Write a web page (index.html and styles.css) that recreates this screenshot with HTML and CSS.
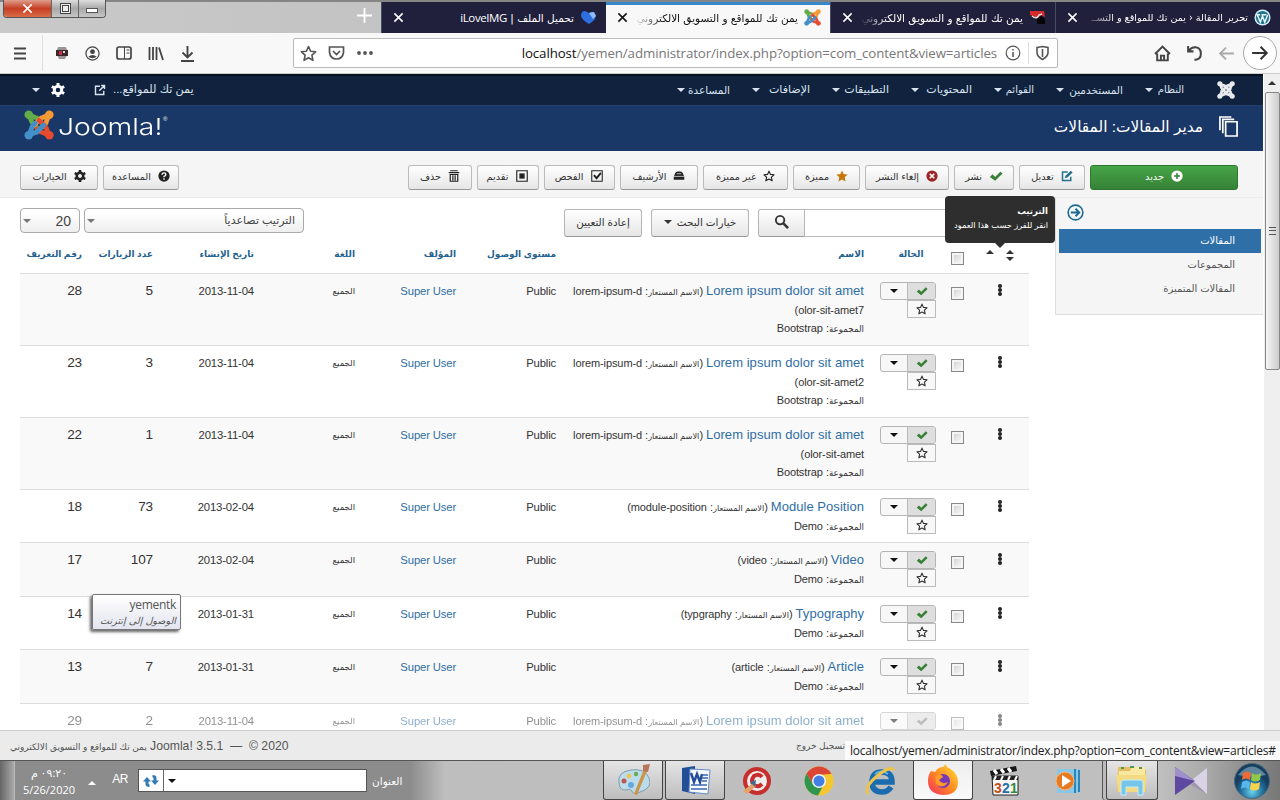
FILE: index.html
```html
<!DOCTYPE html>
<html lang="ar" dir="rtl">
<head>
<meta charset="utf-8">
<title>مدير المقالات</title>
<link rel="stylesheet" href="styles.css">
</head>
<body>
<svg class="sprite" aria-hidden="true">
  <symbol id="joomla" viewBox="0 0 32 32">
    <g fill="none" stroke-width="5" stroke-linecap="round" stroke-linejoin="round">
      <path class="jg" d="M5 5l3 7q0 1 2 3l6 6M5 5l7 3q2 0 4 2l2 2"/>
      <path class="jo" d="M27 5l-7 3q-2 0-3 2l-6 6M27 5l-3 7q0 2-2 4l-2 2"/>
      <path class="jr" d="M27 27l-3-7q0-1-2-3l-6-6M27 27l-7-3q-2 0-4-2l-2-2"/>
      <path class="jb" d="M5 27l7-3q2 0 3-2l6-6M5 27l3-7q0-2 2-4l2-2"/>
      <path class="jg" d="M5 5h.1" stroke-width="9"/><path class="jo" d="M27 5h.1" stroke-width="9"/><path class="jr" d="M27 27h.1" stroke-width="9"/><path class="jb" d="M5 27h.1" stroke-width="9"/>
    </g>
  </symbol>
  <symbol id="star" viewBox="0 0 16 16"><path d="M8 1.5l2 4.400 4.700.5-3.500 3.200 1 4.800L8 12l-4.200 2.400 1-4.800L1.300 6.400l4.700-.5z" fill="none" stroke="currentColor" stroke-width="1.500" stroke-linejoin="round"/></symbol>
  <symbol id="starfull" viewBox="0 0 16 16"><path d="M8 .5l2.300 5 5.200.6-3.900 3.700 1.100 5.400L8 12.500l-4.700 2.700 1.100-5.400L.5 6.100l5.200-.6z" fill="currentColor"/></symbol>
  <symbol id="check" viewBox="0 0 16 16"><path d="M1 9l3-3 3 3 6-6 2.500 2.200L7 13.500z" fill="currentColor"/></symbol>
  <symbol id="gear" viewBox="0 0 16 16"><circle cx="8" cy="8" r="4.300" fill="none" stroke="currentColor" stroke-width="3.400"/><path d="M8 0v3M8 13v3M1 4l2.600 1.500M12.400 10.500L15 12M1 12l2.600-1.500M12.400 5.500L15 4" stroke="currentColor" stroke-width="3.400"/></symbol>
  <symbol id="trash" viewBox="0 0 16 16"><path d="M1 3.500h14M3 1h10M3 6h10v9H3zM6.500 7v7M9.500 7v7" fill="none" stroke="currentColor" stroke-width="1.600"/></symbol>
  <symbol id="square" viewBox="0 0 16 16"><path d="M2 2h12v12H2z" fill="none" stroke="currentColor" stroke-width="1.300"/><path d="M5 5h6v6H5z" fill="currentColor"/></symbol>
  <symbol id="checkbox" viewBox="0 0 16 16"><path d="M2 2h12v12H2z" fill="none" stroke="currentColor" stroke-width="1.200"/><path d="M4.500 7l3 3.500 5-6" fill="none" stroke="currentColor" stroke-width="2.200"/></symbol>
  <symbol id="drawer" viewBox="0 0 16 16"><path d="M1 9l2-5q1-2 3-2h4q2 0 3 2l2 5v4H1z" fill="currentColor"/><path d="M1 8.500h14M5 5h6" fill="none" stroke="#eee"/></symbol>
  <symbol id="cancel" viewBox="0 0 16 16"><circle cx="8" cy="8" r="7.500" fill="currentColor"/><path d="M5 5l6 6M11 5l-6 6" stroke="#fff" stroke-width="2.200"/></symbol>
  <symbol id="edit" viewBox="0 0 16 16"><path d="M9 2.500H2v11.500h11V9" fill="none" stroke="currentColor" stroke-width="2"/><path d="M5 11l1-3.500L13 1l2.500 2.200L8.500 10z" fill="currentColor"/></symbol>
  <symbol id="plus" viewBox="0 0 16 16"><circle cx="8" cy="8" r="7.500" fill="#fff"/><path d="M8 4v8M4 8h8" stroke="#378137" stroke-width="2"/></symbol>
  <symbol id="help" viewBox="0 0 16 16"><circle cx="8" cy="8" r="7.500" fill="currentColor"/><path d="M5.500 6.200q0-2.400 2.500-2.400t2.500 2.100q0 1.600-2.500 2.600v1M8 11v2" fill="none" stroke="#fff" stroke-width="1.800"/></symbol>
  <symbol id="search" viewBox="0 0 16 16"><circle cx="6.500" cy="6.500" r="4.500" fill="none" stroke="currentColor" stroke-width="2"/><path d="M10 10l5 5" stroke="currentColor" stroke-width="2.800"/></symbol>
  <symbol id="external" viewBox="0 0 16 16"><path d="M8 3H2v11h11V9M7 9l6.500-6.500M9.500 2H14v4.500" fill="none" stroke="currentColor" stroke-width="1.900"/></symbol>
  <symbol id="copies" viewBox="0 0 20 22"><path d="M7 6h12v15H7zM4 18V3.500h12M1 15V1h12" fill="none" stroke="currentColor" stroke-width="1.800"/></symbol>
  <symbol id="arrow" viewBox="0 0 16 16"><path d="M1 8h13M8.500 2.500L14 8l-5.500 5.500" fill="none" stroke="currentColor" stroke-width="1.800"/></symbol>
  <symbol id="close" viewBox="0 0 12 12"><path d="M1.500 1.500l9 9M10.500 1.500l-9 9" stroke="currentColor" stroke-width="1.700"/></symbol>
</svg>

<header class="tabs">
  <div class="tab"><svg width="17" height="17" viewBox="0 0 18 18"><circle cx="9" cy="9" r="8.500" fill="#d5f1fa"/><circle cx="9" cy="9" r="7" fill="#25738f"/><path d="M3.500 6l3.200 8L9 7.500l2.400 6.500L14.500 6M2.500 6h4M8 6h5" fill="none" stroke="#e8fbff" stroke-width="1.500"/></svg><span class="title fading first">تحرير المقالة ‹ يمن تك للمواقع و التســ</span><svg class="x"><use href="#close"/></svg></div>
  <div class="tab"><svg width="17" height="15" viewBox="0 0 17 15"><path d="M1 1h14l1 6-4-2-3 3L1 5z" fill="#d62b2b"/><path d="M8 8l4-2 4 3v5H8z" fill="#050505"/><path d="M3 6q5 4 7-1l3-1" fill="none" stroke="#ddd" stroke-width="1.500"/></svg><span class="title fading">يمن تك للمواقع و التسويق الالكتروني</span><svg class="x"><use href="#close"/></svg></div>
  <div class="tab active"><svg class="jcolor" width="17" height="17"><use href="#joomla"/></svg><span class="title fading">يمن تك للمواقع و التسويق الالكتروني</span><svg class="x"><use href="#close"/></svg></div>
  <div class="tab"><svg width="17" height="15" viewBox="0 0 17 15"><path d="M1 6q0-5 4-5l4 2q4-3 6 1 3 4-6 10Q2 10 1 6z" fill="#2e6fe0"/><path d="M9 3l5-1 2 4-3 3z" fill="#8fbbf8"/></svg><span class="title">تحميل الملف | <bdi>iLoveIMG</bdi></span><svg class="x"><use href="#close"/></svg></div>
  <div class="newtab"><svg width="17" height="17" viewBox="0 0 17 17"><path d="M8.500 1v15M1 8.500h15" stroke="#fff" stroke-width="1.800"/></svg></div>
  <div class="wincontrols"><span class="min"><i></i></span><span class="max"><i></i></span><span class="exit"><svg width="11" height="11"><use href="#close"/></svg></span></div>
</header>

<nav class="browser">
  <span class="forward"><svg width="18" height="18"><use href="#arrow"/></svg></span>
  <svg class="back" width="17" height="17"><use href="#arrow"/></svg>
  <svg class="reload" width="17" height="17" viewBox="0 0 16 16"><path d="M2 1v5h5M2.500 5.500Q5 2 9 2.200q5 .5 5 6t-6 5.800" fill="none" stroke="currentColor" stroke-width="1.900"/></svg>
  <svg class="home" width="17" height="17" viewBox="0 0 16 16"><path d="M1 8.500L8 1.500l7 7M3 8v6.500h10V8M6.500 14v-4h3v4" fill="none" stroke="currentColor" stroke-width="1.800"/></svg>
  <div class="urlbar">
    <svg width="15" height="16" viewBox="0 0 15 16"><path d="M2 2.500l5.500-1 5.500 1v5q0 4-5.500 7Q2 11.500 2 7.500zM7.500 4v8" fill="none" stroke="currentColor" stroke-width="1.600"/></svg>
    <i class="rule"></i>
    <svg width="16" height="16" viewBox="0 0 16 16"><circle cx="8" cy="8" r="6.800" fill="none" stroke="currentColor" stroke-width="1.200"/><path d="M8 7v5M8 4v1.600" stroke="currentColor" stroke-width="1.500"/></svg>
    <span class="url" dir="ltr"><b>localhost</b>/yemen/administrator/index.php?option=com_content&amp;view=articles</span>
    <svg width="18" height="6" viewBox="0 0 18 6"><g fill="currentColor"><circle cx="3" cy="3" r="1.900"/><circle cx="9" cy="3" r="1.900"/><circle cx="15" cy="3" r="1.900"/></g></svg>
    <svg width="17" height="16" viewBox="0 0 17 16"><path d="M1.500 2h14v5.500q-1 6.500-7 6.500t-7-6.500zM5 6l3.500 3.500L12 6" fill="none" stroke="currentColor" stroke-width="1.700"/></svg>
    <svg width="17" height="17"><use href="#star"/></svg>
  </div>
  <div class="tools">
    <svg width="15" height="17" viewBox="0 0 15 17"><path d="M7.500 1v11M2.500 7.500l5 5 5-5M1 16h13" fill="none" stroke="currentColor" stroke-width="1.900"/></svg>
    <svg width="16" height="15" viewBox="0 0 16 15"><path d="M1.500 1v13M5 1v13M8.500 1v13M11 1.500L15 14" stroke="currentColor" stroke-width="1.800"/></svg>
    <svg width="16" height="14" viewBox="0 0 16 14"><rect x="1" y="1" width="14" height="12" rx="2" fill="none" stroke="currentColor" stroke-width="1.700"/><path d="M8.500 1v12M10.500 4h3M10.500 7h3" stroke="currentColor"/></svg>
    <svg width="15" height="15" viewBox="0 0 16 16"><circle cx="8" cy="8" r="7" fill="none" stroke="currentColor" stroke-width="1.300"/><circle cx="8" cy="6" r="2.600" fill="currentColor"/><path d="M3.500 11.500q4.500-4 9 0-4.500 3-9 0z" fill="currentColor"/></svg>
    <svg width="14" height="14" viewBox="0 0 14 14"><path d="M3 1h8l2 6-3 6H4L1 7z" fill="#9b9694"/><path d="M1 4h12v6H1z" fill="#39272b"/><path d="M4 5h3v4H4z" fill="#bd344b"/><path d="M8 5h2v2H8z" fill="#e6d5d2"/></svg>
    <i class="rule"></i>
    <svg width="14" height="13" viewBox="0 0 14 13"><path d="M1 1.500h12M1 6.500h12M1 11.500h12" stroke="currentColor" stroke-width="1.900"/></svg>
  </div>
</nav>

<div class="viewport">
  <div class="scroll"><i class="up"></i><div class="thumb"><i></i></div></div>
  <main class="page">
    <nav class="menu">
      <svg class="mono" width="18" height="18"><use href="#joomla"/></svg>
      <a class="m1">النظام</a><a class="m2">المستخدمين</a><a class="m3">القوائم</a><a class="m4">المحتويات</a><a class="m5">التطبيقات</a><a class="m6">الإضافات</a><a class="m7">المساعدة</a>
      <span class="site">يمن تك للمواقع...</span>
      <svg class="ext" width="12" height="12"><use href="#external"/></svg>
      <svg class="cog" width="14" height="14"><use href="#gear"/></svg>
      <i class="caret"></i>
    </nav>
    <div class="header">
      <svg width="19" height="21"><use href="#copies"/></svg>
      <h1>مدير المقالات: المقالات</h1>
      <div class="brand" dir="ltr"><svg class="jcolor" width="30" height="30"><use href="#joomla"/></svg><span>Joomla!</span><sup>®</sup></div>
    </div>
    <div class="actions">
      <button class="btn new"><svg><use href="#plus"/></svg>جديد</button>
      <button class="btn b-edit"><svg class="teal"><use href="#edit"/></svg>تعديل</button>
      <button class="btn b-pub"><svg class="green wide"><use href="#check"/></svg>نشر</button>
      <button class="btn b-unpub"><svg class="red"><use href="#cancel"/></svg>إلغاء النشر</button>
      <button class="btn b-feat"><svg class="orange"><use href="#starfull"/></svg>مميزة</button>
      <button class="btn b-unfeat"><svg><use href="#star"/></svg>غير مميزة</button>
      <button class="btn b-arch"><svg><use href="#drawer"/></svg>الأرشيف</button>
      <button class="btn b-chk"><svg class="wide"><use href="#checkbox"/></svg>الفحص</button>
      <button class="btn b-front"><svg class="wide"><use href="#square"/></svg>تقديم</button>
      <button class="btn b-del"><svg><use href="#trash"/></svg>حذف</button>
      <span class="grow"></span>
      <button class="btn b-help"><svg><use href="#help"/></svg>المساعدة</button>
      <button class="btn b-opt"><svg><use href="#gear"/></svg>الخيارات</button>
    </div>
    <div class="body">
      <aside class="sidebar">
        <svg width="17" height="17" viewBox="0 0 18 18"><circle cx="9" cy="9" r="7.800" fill="none" stroke="currentColor" stroke-width="1.700"/><path d="M4 9h9M9 5l4 4-4 4" fill="none" stroke="currentColor" stroke-width="2"/></svg>
        <a class="on">المقالات</a><a>المجموعات</a><a>المقالات المتميزة</a>
      </aside>
      <section class="content">
        <div class="filters">
          <div class="searchbox"><span class="input"></span><button class="fbtn"><svg width="15" height="15"><use href="#search"/></svg></button></div>
          <button class="fbtn f-opt">خيارات البحث <i class="caret"></i></button>
          <button class="fbtn f-reset">إعادة التعيين</button>
          <span class="grow"></span>
          <div class="select s-order"><span>الترتيب تصاعدياً</span><i class="caret"></i></div>
          <div class="select s-count"><span>20</span><i class="caret"></i></div>
        </div>
        <div class="row head">
          <div class="sort"><i class="both"></i><i class="up"></i></div>
          <div class="c-check"><i class="box"></i></div>
          <div class="c-state">الحالة</div><div>الاسم</div><div>مستوى الوصول</div><div>المؤلف</div><div>اللغة</div><div>تاريخ الإنشاء</div><div>عدد الزيارات</div><div>رقم التعريف</div>
        </div>
        <div id="rows"></div>
      </section>
    </div>
    <div class="tip"><b>الترتيب</b><span>انقر للفرز حسب هذا العمود</span></div>
    <div class="nettip"><span>yementk</span><em>الوصول إلى إنترنت</em></div>
  </main>
</div>

<footer class="status">
  <span class="logout">تسجيل خروج</span>
  <span class="copy" dir="ltr"><bdi class="sitename">يمن تك للمواقع و التسويق الالكتروني</bdi> Joomla! 3.5.1 &nbsp;—&nbsp; © 2020</span>
  <span class="link" dir="ltr">localhost/yemen/administrator/index.php?option=com_content&amp;view=articles#</span>
</footer>

<div class="taskbar">
  <span class="app start"><svg width="38" height="38" viewBox="0 0 38 38"><defs><radialGradient id="orb" cy=".8"><stop offset="0" stop-color="#6bd3ed"/><stop offset=".6" stop-color="#23719f"/><stop offset="1" stop-color="#153e60"/></radialGradient></defs><circle cx="19" cy="19" r="17.500" fill="url(#orb)" stroke="#48677c"/><path d="M5 13q14-17 28 0-14 3-28 0z" fill="#b8dce9" opacity=".45"/><path d="M10 11q4-3 8 0l-1 7q-4-3-8 0z" fill="#ef6a35"/><path d="M19 11q4 3 9 0l-1 7q-5 3-9 0z" fill="#91c84b"/><path d="M9 20q4-3 8 0l-1 7q-4-3-8 0z" fill="#59b5ed"/><path d="M18 20q4 3 9 0l-1 7q-5 3-9 0z" fill="#fad34b"/></svg></span>
  <span class="app kmp"><svg width="34" height="30" viewBox="0 0 34 30"><path d="M1 1l20 14L1 29z" fill="#5f489f"/><path d="M1 1l20 14-20-5z" fill="#9f8fca"/><path d="M33 2L19 13l2 2-3 3 15 10z" fill="#d9d4e5"/><path d="M33 28L20 16l-3 3z" fill="#9d97ac"/></svg></span>
  <span class="app open folder"><svg width="34" height="32" viewBox="0 0 34 32"><path d="M3 3h12l2 3h14v22H2z" fill="#e3bf62"/><path d="M4 7h11l2-4h13v18H3z" fill="#fae8a0"/><path d="M6 4h3M15 3h4M24 4h3" stroke="#52965a" stroke-width="2"/><path d="M1 11h31l-2 17H3z" fill="#f4da83"/><path d="M6 31V19q0-3 3-3h16q3 0 3 3v12h-5v-8H11v8z" fill="#75c6e8" stroke="#c7edf9"/></svg></span>
  <span class="app wmp"><svg width="30" height="30" viewBox="0 0 30 30"><path d="M4 3h22v24H4z" fill="#89c7e8"/><path d="M21 3h2v24h-2M25 4h2v22h-2" fill="#2a85bd"/><circle cx="12" cy="15" r="9" fill="#e77b24" stroke="#f7ba7d"/><path d="M9 9l9 6-9 6z" fill="#fff"/></svg></span>
  <span class="app mpc"><svg width="32" height="32" viewBox="0 0 32 32"><path d="M3 11h26v19H4z" fill="#f7f7f7" stroke="#222"/><path d="M1 6l26-5 1 5L2 11z" fill="#151515"/><path d="M5 5l3 4M12 4l3 4M19 3l3 4" stroke="#fff" stroke-width="3"/><path d="M3 11h26v4H3z" fill="#222"/><path d="M7 11l-2 4M14 11l-2 4M21 11l-2 4M28 11l-2 4" stroke="#fff" stroke-width="2"/><g font-family="Liberation Sans" font-weight="700" font-size="14" direction="ltr"><text x="5" y="28" fill="#c24d16">3</text><text x="13" y="28" fill="#246faa">2</text><text x="21" y="28" fill="#35893b">1</text></g></svg></span>
  <span class="app open ff"><svg width="32" height="32" viewBox="0 0 32 32"><defs><linearGradient id="fx" x1="1" x2="0" y2="1"><stop offset="0" stop-color="#ffe53d"/><stop offset=".5" stop-color="#ff8b22"/><stop offset="1" stop-color="#f42b61"/></linearGradient></defs><path d="M4 7l4 1q3-5 8-5l3-3q0 3 3 4 9 5 9 14 0 13-15 13Q1 30 1 17q0-6 3-10z" fill="url(#fx)"/><circle cx="16" cy="17" r="7" fill="#7638b8"/><path d="M8 12q6-4 8 1l-4 3q3 5 9 2-5 8-12 2z" fill="#ff9a24"/></svg></span>
  <span class="app ie"><svg width="32" height="32" viewBox="0 0 32 32"><path d="M26 22Q23 27 17 27 7 27 7 17T17 7q10 0 10 10H9" fill="none" stroke="#1a6cae" stroke-width="5.500"/><path d="M10 9q6-5 13 0" fill="none" stroke="#5fb5e6" stroke-width="2"/><path d="M3 29Q-1 22 12 11 26 0 29 5" fill="none" stroke="#eec34b" stroke-width="3"/></svg></span>
  <span class="app chrome"><svg width="30" height="30" viewBox="0 0 30 30"><circle cx="15" cy="15" r="14.500" fill="#f6c62f"/><path d="M2.500 7.700A14.500 14.500 0 0 1 27.500 7.700L15 9l-6 9z" fill="#da4535"/><path d="M2.500 7.700A14.500 14.500 0 0 0 14 29.500L20 18l-11 0z" fill="#30954f"/><circle cx="15" cy="15" r="7" fill="#f4f4f4"/><circle cx="15" cy="15" r="5.500" fill="#447fe6"/></svg></span>
  <span class="app cc"><svg width="30" height="30" viewBox="0 0 30 30"><circle cx="15" cy="15" r="14" fill="#c72f2d"/><circle cx="15" cy="15" r="10" fill="#eee"/><path d="M20 11q-3-4-8-1-4 5 0 9 4 3 8-1" fill="none" stroke="#cb2d2c" stroke-width="4"/><path d="M1 25l10-8 3 3L5 28z" fill="#e1a26b"/><path d="M8 16l5 5 1-7z" fill="#3e6d93"/></svg></span>
  <span class="app open word"><svg width="31" height="31" viewBox="0 0 31 31"><path d="M2 3l13-2v28L2 26z" fill="#234d94"/><path d="M10 4l20 1-2 24-19-2z" fill="#f6faff" stroke="#668cc8"/><path d="M11 8l3 9 3-8 3 8 2-8" fill="none" stroke="#244e99" stroke-width="2.500"/><path d="M22 10h6M22 13h6M22 16h5M11 20h16M11 24h16" stroke="#3b68b1" stroke-width="1.700"/></svg></span>
  <span class="app open paint"><svg width="33" height="32" viewBox="0 0 33 32"><path d="M2 19Q0 8 14 6t18 8-9 14q-6 4-8-1-2-3-6-1-6 1-7-7z" fill="#bddceb" stroke="#799fae"/><circle cx="7" cy="17" r="2.500" fill="#bd5650"/><circle cx="12" cy="12" r="2.300" fill="#efc64a"/><circle cx="19" cy="10" r="2.200" fill="#6aab59"/><circle cx="14" cy="21" r="3" fill="#64aad9"/><path d="M27 5L17 30l3 1L30 7z" fill="#c99647"/><path d="M26 1l7-1-2 8-5-1z" fill="#b97558"/></svg></span>
  <span class="grow"></span>
  <span class="addr">العنوان</span>
  <span class="addrbox"><span><i class="caret"></i></span><svg width="16" height="14" viewBox="0 0 16 14"><path d="M4 3L0 7.500h2.500V10q0 3 4 3v-2.500q-1 0-1-1V7.500H8zM12 11l4-4.500h-2.500V4q0-3-4-3v2.500q1 0 1 1v2H8z" fill="#347ab2"/></svg></span>
  <span class="lang">AR</span>
  <i class="tray"></i>
  <span class="clock"><span>٠٩:٢٠ م</span><span dir="ltr">5/26/2020</span></span>
  <i class="peek"></i>
</div>
<script src="app.js"></script>
</body>
</html>
```
FILE: styles.css
```css
* { box-sizing: border-box; }
body { margin: 0; width: 1280px; height: 800px; overflow: hidden; font-family: "Liberation Sans", "DejaVu Sans", sans-serif; font-size: 13px; color: #333; display: flex; flex-direction: column; background: #fff; }
.sprite { position: absolute; width: 0; height: 0; }
svg { flex: none; }
i { flex: none; display: block; }
.grow { flex: 1; }
.caret { width: 0; height: 0; border: 4px solid transparent; border-top-color: currentColor; border-bottom: 0; }
button { font: inherit; color: inherit; padding: 0; margin: 0; }

.jg { stroke: #62ad48; } .jo { stroke: #f59a35; } .jr { stroke: #e64b32; } .jb { stroke: #438fca; }

.tabs { height: 33px; flex: none; display: flex; background: linear-gradient(90deg, #c9c9c9, #b5b5b5); border-top: 2px solid #858585; }
.tab { width: 225px; display: flex; align-items: center; gap: 6px; padding: 0 9px 0 11px; background: #20203c; color: #fff; border-left: 1px solid #4a4a60; }
.tab.active { width: 224px; background: #f8f8f9; color: #111; border: 0; border-top: 3px solid #3787cb; padding-bottom: 3px; }
.title { flex: 1; white-space: nowrap; overflow: hidden; height: 20px; line-height: 20px; font-family: "DejaVu Sans", sans-serif; font-size: 10.5px; }
.fading { -webkit-mask-image: linear-gradient(270deg, #000 82%, transparent); mask-image: linear-gradient(270deg, #000 82%, transparent); }
.title.first { font-size: 9.6px; }
.title bdi { font-family: "Open Sans", sans-serif; font-size: 11.5px; letter-spacing: -.4px; }
.tab .x { width: 11px; height: 11px; }
.newtab { width: 34px; display: flex; align-items: center; justify-content: center; padding-bottom: 4px; }
.wincontrols { margin-right: auto; margin-left: 3px; height: 18px; margin-top: -2px; display: flex; border: 1px solid #555; border-top: 0; border-radius: 0 0 4px 4px; overflow: hidden; }
.wincontrols span { display: flex; align-items: center; justify-content: center; background: linear-gradient(#ddd, #a8a8a8 50%, #c7c7c7); width: 27px; border-left: 1px solid #666; }
.wincontrols .exit { width: 47px; color: #fff; background: linear-gradient(#df9d8d, #c63e24 50%, #d96d4b); border: 0; }
.min i { width: 12px; height: 5px; background: #fff; border: 1px solid #555; margin-top: 4px; }
.max i { width: 11px; height: 11px; border: 3px double #444; background: #eee; }

.browser { height: 41px; flex: none; background: #f8f8f9; color: #444; display: flex; align-items: center; padding-right: 3px; border-bottom: 1px solid #ccc; }
.forward { width: 34px; height: 34px; border: 1px solid #aaa; border-radius: 50%; display: flex; align-items: center; justify-content: center; background: #fff; color: #333; }
.back { color: #aaa; margin-right: 8px; transform: scaleX(-1); }
.reload, .home { margin-right: 15px; }
.urlbar { margin-right: 96px; margin-left: 98px; width: 765px; height: 30px; background: #fff; border: 1px solid #bbb; border-radius: 2px; display: flex; align-items: center; color: #555; padding: 0 7px 0 6px; }
.rule { width: 1px; height: 22px; background: #ddd; }
.urlbar .rule { margin: 0 6px 0 7px; }
.url { flex: 1; text-align: right; margin-right: 8px; font: 13.3px/20px "Open Sans", sans-serif; color: #777; letter-spacing: -.1px; white-space: nowrap; }
.url b { color: #111; font-weight: 400; }
.urlbar svg:nth-last-child(2), .urlbar svg:last-child { margin-right: 11px; }
.tools { display: flex; align-items: center; gap: 16px; }
.tools .rule { margin-left: -1px; margin-right: -4px; height: 36px; }

.viewport { height: 656px; flex: none; display: flex; }
.page { width: 1263px; height: 656px; position: relative; display: flex; flex-direction: column; }
.menu { height: 31px; flex: none; background: #10223e; border-top: 2px solid #06101f; color: #d9e3ee; display: flex; align-items: center; padding: 0 28px 2px 0; font-size: 11px; }
.mono { filter: brightness(0) invert(1); opacity: .9; margin-left: 33px; }
.menu a { display: flex; align-items: center; justify-content: space-between; white-space: nowrap; margin-left: 22px; }
.menu a::after { content: ""; border: 4px solid transparent; border-top-color: #d9e3ee; border-bottom: 0; }
.m1 { width: 39px; } .m2 { width: 67px; } .m3 { width: 40px; } .m4 { width: 61px; } .m5 { width: 57px; } .m6 { width: 58px; } .m7 { width: 53px; }
.m2, .m7 { font-size: 10.5px; } .m1, .m3 { font-size: 10px; }
.site { margin-right: auto; font-size: 11.3px; }
.ext { margin-right: 9px; }
.cog { margin-right: 29px; margin-left: 11px; color: #fff; }
.menu > .caret { margin-left: 32px; }
.site { position: relative; right: 2px; }
.header { height: 46px; flex: none; background: #1a3867; border-top: 1px solid #243f6d; color: #fff; display: flex; align-items: center; padding: 0 25px 4px 24px; }
.header h1 { font-size: 15.400px; font-weight: 400; margin: 0 16px 0 0; }
.brand { margin-right: auto; display: flex; align-items: center; }
.brand svg { margin-top: -3px; }
.brand span { font: 300 23px/30px "Inter", "Lato", sans-serif; margin-left: 4px; width: 105px; transform: scaleX(1.23); transform-origin: left; }
.brand sup { font-size: 6px; line-height: 8px; align-self: flex-start; margin-top: 3px; }
.actions { height: 47px; flex: none; background: #f5f5f5; border-bottom: 1px solid #eaeaea; display: flex; gap: 5px; padding: 14px 25px 0 20px; }
.btn { height: 25px; border: 1px solid #bbb; border-bottom-color: #999; border-radius: 3px; background: linear-gradient(#fff, #e6e6e6); display: flex; align-items: center; justify-content: center; gap: 7px; font-size: 9.700px; padding-bottom: 3px; white-space: nowrap; }
.btn svg { width: 12px; height: 12px; color: #222; }
.btn svg.wide { width: 14px; height: 14px; }
.new { width: 148px; background: linear-gradient(#46a546, #378137); border-color: #2f762f; color: #fff; }
.btn .teal { color: #24708d; } .btn .green { color: #378137; } .btn .red { color: #9d2525; } .btn .orange { color: #c67605; }
.b-edit { width: 66px; } .b-pub { width: 60px; } .b-unpub { width: 84px; } .b-feat { width: 67px; } .b-unfeat { width: 85px; } .b-arch { width: 78px; } .b-chk { width: 71px; } .b-front { width: 62px; } .b-del { width: 64px; } .b-help { width: 76px; } .b-opt { width: 78px; }

.body { height: 532px; display: flex; align-items: flex-start; overflow: hidden; }
.sidebar { width: 208px; height: 117px; background: #f5f5f5; border-left: 1px solid #ddd; border-bottom: 1px solid #ddd; padding: 6px 2px 0 3px; color: #555; font-size: 10px; }
.sidebar > svg { color: #1c6a93; display: block; margin-right: 177px; margin-bottom: 8px; }
.sidebar a { display: block; height: 24px; line-height: 23px; padding-right: 26px; }
.sidebar .on { background: #2f6fa8; color: #fff; }
.content { width: 1009px; margin-right: 26px; }
.filters { height: 38px; padding-top: 10px; display: flex; }
.searchbox { display: flex; margin-right: 58px; }
.input { width: 166px; height: 28px; margin-top: 1px; border: 1px solid #bbb; border-left: 0; }
.searchbox .fbtn { width: 47px; border-radius: 3px 0 0 3px; }
.fbtn { height: 28px; margin-top: 1px; border: 1px solid #b5b5b5; border-bottom-color: #999; border-radius: 3px; background: linear-gradient(#fff, #e6e6e6); display: flex; align-items: center; justify-content: center; gap: 5px; white-space: nowrap; font-size: 10.400px; padding-bottom: 3px; }
.f-opt { width: 98px; margin-right: 9px; } .f-reset { width: 78px; margin-right: 9px; }
.select { height: 25px; border: 1px solid #aaa; border-radius: 4px; background: linear-gradient(#fff 20%, #eee); display: flex; align-items: center; justify-content: space-between; padding: 0 8px 0 2px; color: #444; }
.select .caret { color: #777; }
.s-order { width: 220px; font-size: 11px; margin-left: 4px; } .s-count { width: 60px; font-size: 14px; }

.row { display: grid; grid-template-columns: 59px 26px 72px 308px 100px 101px 101px 101px 71px 70px; border-bottom: 1px solid #ddd; height: 53px; font-size: 12px; letter-spacing: -.15px; }
.row > div { padding: 8px 8px 0 0; white-space: nowrap; line-height: 18px; font-size: 11.3px; }
.row.tall { height: 72px; }
.row.mid { height: 54px; }
.row.odd { background: #f9f9f9; }
.row.fade { opacity: .55; height: 27px; overflow: hidden; border: 0; }
.row.head { height: 38px; font-weight: 700; color: #24628f; letter-spacing: 0; }
.row.head > div { padding-top: 9px; font-size: 9px; }
.row.head .c-state { text-align: center; padding-left: 14px; }
.row > .sort, .row.head > .sort { display: flex; padding: 14px 15px 0 0; gap: 12px; }
.both { width: 8px; height: 10px; }
.both::before, .both::after, i.up { content: ""; display: block; width: 0; height: 0; border: 4px solid transparent; border-top: 0; border-bottom-color: #333; }
.both::after { transform: scaleY(-1); margin-top: 3px; }
.row > .c-check { padding: 13px 6px 0 0; }
.row.head > .c-check { padding-top: 16px; }
.box { width: 13px; height: 13px; border: 1px solid #888; background: linear-gradient(135deg, #ccc, #fff); box-shadow: inset 0 0 0 2px #f4f4f4; }
.row > .dots { padding: 10px 27px 0 0; }
.dots i { width: 4px; height: 4px; border-radius: 2px; background: #222; }
.dots i + i { margin-top: 0; }
.pair { display: flex; width: 56px; height: 19px; border: 1px solid #b5b5b5; border-radius: 3px; overflow: hidden; background: #f7f7f7; }
.row > .state { padding-top: 8px; }
.row > .state .pair { height: 18px; }
.pair span { width: 29px; display: flex; align-items: center; justify-content: center; background: #dedede; border-left: 1px solid #bbb; color: #378137; }
.pair .caret { margin: 6px 9px; color: #111; }
.fade .pair span { color: #888; }
.fav { width: 29px; height: 18px; border: 1px solid #bbb; background: #f8f8f8; display: flex; align-items: center; justify-content: center; }
.name a { font-size: 13px; color: #2f6ea5; letter-spacing: .05px; }
.name p { margin: 0; height: 18px; font-size: 11px; letter-spacing: -.1px; }
.name p:first-child { height: 19px; }
.name .ar { font-size: 8.200px; letter-spacing: 0; }
.name p + p .ar { font-size: 8.700px; }
.row > .num { font-size: 13.600px; }
.author { color: #2f6ea5; }
.row > .lang-cell { font-size: 8.500px; letter-spacing: 0; }

.tip { position: absolute; left: 945px; top: 122px; width: 110px; height: 47px; border-radius: 4px; background: #2e2e2e; color: #fff; padding: 8px 7px; display: flex; flex-direction: column; font-size: 8.300px; line-height: 15px; white-space: nowrap; }
.tip b { font-size: 8.600px; line-height: 14px; }
.tip::after { content: ""; position: absolute; left: 50px; top: 47px; border: 5px solid transparent; border-top-color: #2e2e2e; border-bottom: 0; }
.nettip { position: absolute; left: 92px; top: 520px; width: 89px; height: 36px; border: 1px solid #777; border-radius: 2px; background: linear-gradient(#fff, #e3e4ef); box-shadow: -2px 2px 3px #666; padding: 1px 4px; color: #555; display: flex; flex-direction: column; font: 12px/17px "Open Sans", sans-serif; white-space: nowrap; }
.nettip span { letter-spacing: -.3px; }
.nettip em { font: italic 9.600px/15px "DejaVu Sans", sans-serif; }
.scroll { width: 17px; background: #efefef; display: flex; flex-direction: column; align-items: center; border-left: 1px solid #fff; height: 656px; }
.scroll .up { margin: 7px 0; }
.thumb { width: 15px; height: 278px; border: 1px solid #888; border-radius: 2px; background: linear-gradient(90deg, #f5f5f5, #ccc); padding: 134px 3px 0; }
.thumb i { height: 8px; border: solid #555; border-width: 1px 0; background: linear-gradient(transparent 2px, #555 2px 3px, transparent 3px); }

.status { height: 30px; flex: none; background: #ebebeb; border-top: 1px solid #ccc; position: relative; display: flex; justify-content: space-between; align-items: center; padding: 0 435px 0 10px; color: #555; font-size: 12.200px; line-height: 20px; white-space: nowrap; }
.status .sitename, .logout { font-size: 9px; }
.copy { padding-top: 2px; }
.link { position: absolute; right: 0; bottom: 0; width: 435px; height: 19px; background: #fafafa; color: #222; font: 12px/19px "Open Sans", sans-serif; letter-spacing: -.24px; padding-left: 5px; }

.taskbar { height: 40px; flex: none; border-top: 1px solid #555; background: linear-gradient(90deg, #8c8c8c 410px, #bebebe 445px, #bfbfbf 1160px, #aaa 1205px, #777 1280px); display: flex; align-items: center; color: #fff; white-space: nowrap; }
.app { width: 62px; height: 39px; flex: none; display: flex; align-items: center; justify-content: center; }
.app.open { width: 60px; margin: 0 1px; border: 1px solid #444; border-top: 0; border-radius: 0 0 3px 3px; background: linear-gradient(#e5e5e5, #bdbdbd); }
.start { width: 56px; } .kmp { width: 66px; }
.app.folder { width: 52px; margin: 0 0 0 6px; box-shadow: -3px 0 0 #bbb, -4px 0 0 #555; }
.app.ff { background: linear-gradient(#eee, #fafafa); }
.wmp { width: 64px; }
.addr { font-size: 10.500px; margin-left: 5px; }
.addrbox { width: 229px; height: 23px; background: #fff; border: 1px solid #555; display: flex; align-items: center; color: #111; }
.addrbox span { flex: 1; height: 100%; border-left: 1px solid #666; display: flex; align-items: center; justify-content: flex-end; padding-left: 4px; }
.addrbox svg { margin: 0 4px; }
.lang { font-size: 12px; margin: 0 10px 4px 0; width: 17px; letter-spacing: -.5px; }
.tray { width: 0; height: 0; margin: 4px 15px 0 0; border: 4px solid transparent; border-top: 0; border-bottom-color: #fff; }
.clock { margin-right: 13px; width: 52px; display: flex; flex-direction: column; align-items: center; font: 11px/17px "Open Sans", "DejaVu Sans", sans-serif; }
.peek { width: 15px; height: 39px; margin-right: 8px; background: linear-gradient(90deg, #666, #aaa); border-right: 1px solid #bbb; }
```
FILE: app.js
```javascript
const lorem = 'Lorem ipsum dolor sit amet';
const articles = [
  [28, 5, '2013-11-04', lorem, 'lorem-ipsum-d', 'olor-sit-amet7', 'Bootstrap', 'tall odd'],
  [23, 3, '2013-11-04', lorem, 'lorem-ipsum-d', 'olor-sit-amet2', 'Bootstrap', 'tall'],
  [22, 1, '2013-11-04', lorem, 'lorem-ipsum-d', 'olor-sit-amet', 'Bootstrap', 'tall odd'],
  [18, 73, '2013-02-04', 'Module Position', 'module-position', '', 'Demo', ''],
  [17, 107, '2013-02-04', 'Video', 'video', '', 'Demo', 'mid odd'],
  [14, '', '2013-01-31', 'Typography', 'typgraphy', '', 'Demo', ''],
  [13, 7, '2013-01-31', 'Article', 'article', '', 'Demo', 'mid odd'],
  [29, 2, '2013-11-04', lorem, 'lorem-ipsum-d', '', '', 'fade']
];
document.getElementById('rows').innerHTML = articles.map(([id, hits, date, title, alias, rest, group, kind]) => `
  <div class="row ${kind}">
    <div class="dots"><i></i><i></i><i></i></div>
    <div class="c-check"><i class="box"></i></div>
    <div class="state"><div class="pair"><span><svg width="12" height="12"><use href="#check"/></svg></span><i class="caret"></i></div>${group ? '<div class="fav"><svg width="12" height="12"><use href="#star"/></svg></div>' : ''}</div>
    <div class="name"><p><a>${title}</a> (<span class="ar">الاسم المستعار</span>: ${alias}${group === 'Demo' ? ')' : ''}</p>${rest ? `<p>${rest})</p>` : ''}${group ? `<p><span class="ar">المجموعة</span>: ${group}</p>` : ''}</div>
    <div>Public</div>
    <div class="author">Super User</div>
    <div class="lang-cell">الجميع</div>
    <div class="date">${date}</div>
    <div class="num">${hits}</div>
    <div class="num">${id}</div>
  </div>`).join('');
```
